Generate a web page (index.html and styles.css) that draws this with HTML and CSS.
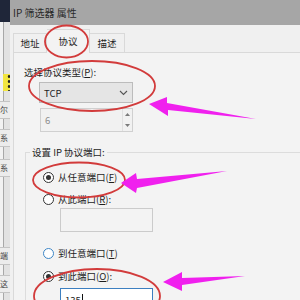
FILE: index.html
```html
<!DOCTYPE html>
<html lang="zh-CN">
<head>
    <meta charset="UTF-8">
    <title>IP 筛选器 属性</title>
    <link rel="stylesheet" href="styles.css">
</head>
<body>
    <div class="desk">
        <!-- background window edge -->
        <div class="side">
            <div class="side-top"></div>
            <div class="side-body">
                <div class="side-gap"></div>
                <div class="side-hl"></div>
                <div class="side-item">尔</div>
                <div class="side-item">系</div>
                <div class="side-item low">系</div>
                <div class="side-item low2">端</div>
                <div class="side-item">这</div>
            </div>
        </div>

        <!-- dialog -->
        <div class="win">
            <div class="title">IP 筛选器 属性</div>
            <div class="frame">
                <div class="tabs">
                    <div class="tab first">地址</div>
                    <div class="tab active">协议</div>
                    <div class="tab last">描述</div>
                </div>
                <div class="panel">
                    <div class="label">选择协议类型(<u>P</u>):</div>
                    <div class="combo">
                        <span>TCP</span>
                        <svg class="chev" width="9" height="6" viewBox="0 0 9 6"><path d="M1 1l3.5 3.5L8 1" fill="none" stroke="#555" stroke-width="1.1"/></svg>
                    </div>
                    <div class="spin">
                        <span>6</span>
                        <div class="spin-btns">
                            <div class="spin-btn"><svg width="5" height="3" viewBox="0 0 5 3"><path d="M0 3L2.5 0L5 3z" fill="#7a7a7a"/></svg></div>
                            <div class="spin-btn"><svg width="5" height="3" viewBox="0 0 5 3"><path d="M0 0L2.5 3L5 0z" fill="#7a7a7a"/></svg></div>
                        </div>
                    </div>

                    <fieldset class="group">
                        <legend>设置 IP 协议端口:</legend>
                        <div class="radio r1"><span class="dot checked"></span><span>从任意端口(<u>F</u>)</span></div>
                        <div class="radio r2"><span class="dot"></span><span>从此端口(<u>R</u>):</span></div>
                        <div class="field off"></div>
                        <div class="radio r3"><span class="dot hover"></span><span>到任意端口(<u>T</u>)</span></div>
                        <div class="radio r4"><span class="dot checked"></span><span>到此端口(<u>O</u>):</span></div>
                        <div class="field focus">135<span class="caret"></span></div>
                    </fieldset>
                </div>
            </div>
        </div>

        <!-- annotations drawn over the screenshot -->
        <svg class="marks" width="300" height="300" viewBox="0 0 300 300">
            <g fill="none" stroke="#d23b3b" stroke-width="1.8">
                <ellipse cx="66.5" cy="41.5" rx="21.5" ry="16"/>
                <ellipse cx="92" cy="86" rx="63" ry="25"/>
                <ellipse cx="79" cy="180" rx="46" ry="17.5"/>
                <ellipse cx="97" cy="296" rx="63" ry="27"/>
            </g>
            <g fill="#f020ee">
                <polygon points="149,104 167,97 167,103 256,119 168,110 168,116"/>
                <polygon points="121,183 136,173 137,179 227,171 137,188 136,193"/>
                <polygon points="163,282 182,272 182,278 245,276 182,285 182,291"/>
            </g>
        </svg>
    </div>
</body>
</html>
```

FILE: styles.css
```css
/* Base */
body {
    margin: 0;
    width: 300px;
    height: 300px;
    overflow: hidden;
    background-color: #f0f0f0;
    font-family: "Noto Sans CJK SC", "Noto Sans", sans-serif;
    font-size: 9.5px;
    color: #1e1e1e;
}

u {
    text-decoration: underline;
    text-underline-offset: 1px;
}

.desk {
    position: relative;
    display: flex;
    height: 300px;
    overflow: hidden;
}

/* Background window strip on the left */
.side {
    width: 10px;
    flex: none;
    display: flex;
    flex-direction: column;
    overflow: hidden;
}

.side-top {
    height: 22px;
    background-color: #1f2639;
}

.side-body {
    flex: 1;
    background-color: #e2e2e2;
    border-left: 3px solid #f2f2f2;
    box-shadow: inset 1px 0 0 #a8a8a8;
    display: flex;
    flex-direction: column;
}

.side-gap {
    height: 52px;
}

.side-hl {
    height: 17px;
    background: radial-gradient(circle at 6px 50%, #222 1px, transparent 1.6px) 0 0 / 7px 5px, #f2e640;
}

.side-item {
    height: 16px;
    margin-top: 10px;
    margin-left: -3px;
    line-height: 16px;
    font-size: 8px;
    color: #444;
    border-top: 1px solid #c4c4c4;
    border-bottom: 1px solid #c4c4c4;
    background-color: #ececec;
}

.side-item.low {
    margin-top: 12px;
}

.side-item.low2 {
    margin-top: 70px;
}

/* Dialog */
.win {
    width: 420px;
    flex: none;
    background-color: #f0f0f0;
}

.title {
    height: 25px;
    line-height: 25px;
    padding-left: 3px;
    background-color: #a6a6a6;
    color: #2a2a2a;
    font-size: 10px;
}

.frame {
    padding: 2px 0 0 3px;
}

/* Tabs */
.tabs {
    display: flex;
    align-items: flex-end;
    height: 25px;
}

.tab {
    box-sizing: border-box;
    height: 19px;
    line-height: 18px;
    text-align: center;
    border: 1px solid #d9d9d9;
    border-bottom: none;
    background-color: #f0f0f0;
}

.tab.first {
    width: 34px;
}

.tab.active {
    width: 43px;
    height: 24px;
    line-height: 22px;
    margin-bottom: -1px;
    background-color: #f3f3f3;
    border-left: none;
    position: relative;
}

.tab.last {
    width: 35px;
    border-left: none;
}

/* Tab panel */
.panel {
    height: 260px;
    padding: 11px 0 0 10px;
    border: 1px solid #d9d9d9;
    background-color: #f3f3f3;
}

.label {
    height: 16px;
    line-height: 16px;
}

.combo {
    box-sizing: border-box;
    width: 94px;
    height: 21px;
    margin: 2px 0 0 15px;
    padding: 0 4px 0 4px;
    display: flex;
    align-items: center;
    justify-content: space-between;
    border: 1px solid #bcbcbc;
    background-color: #e5e5e5;
}

.spin {
    box-sizing: border-box;
    width: 93px;
    height: 24px;
    margin: 5px 0 0 16px;
    padding-left: 4px;
    display: flex;
    align-items: center;
    justify-content: space-between;
    border: 1px solid #d0d0d0;
    background-color: #f1f1f1;
    color: #8c8c8c;
}

.spin-btns {
    width: 9px;
    height: 100%;
    display: flex;
    flex-direction: column;
    border-left: 1px solid #e0e0e0;
}

.spin-btn {
    flex: 1;
    display: flex;
    align-items: center;
    justify-content: center;
}

/* Port group */
.group {
    width: 400px;
    margin: 13px 0 0 1px;
    padding: 0 0 0 4px;
    border: 1px solid #dcdcdc;
    min-width: 0;
}

.group legend {
    padding: 0 2px;
    line-height: 14px;
}

.radio {
    display: flex;
    align-items: center;
    gap: 4px;
    height: 18px;
    padding-left: 13px;
}

.r1 { margin-top: 9px; }
.r2 { margin-top: 4px; }
.r3 { margin-top: 12px; }
.r4 { margin-top: 5px; }

.dot {
    box-sizing: border-box;
    width: 11px;
    height: 11px;
    border: 1px solid #333;
    border-radius: 50%;
    background-color: #fff;
    display: flex;
    align-items: center;
    justify-content: center;
}

.dot.checked::after {
    content: "";
    width: 5px;
    height: 5px;
    border-radius: 50%;
    background-color: #333;
}

.dot.hover {
    border-color: #3d86c6;
}

.field {
    box-sizing: border-box;
    width: 93px;
    height: 24px;
    margin-left: 30px;
    padding-left: 4px;
    display: flex;
    align-items: center;
    border: 1px solid #cbcbcb;
    background-color: #f3f3f3;
}

.field.focus {
    margin-top: 3px;
    border-color: #3c7fc0;
    background-color: #fff;
}

.caret {
    width: 1px;
    height: 12px;
    margin-left: 1px;
    background-color: #111;
}

/* Annotation overlay */
.marks {
    position: absolute;
    left: 0;
    top: 0;
    pointer-events: none;
}
```
